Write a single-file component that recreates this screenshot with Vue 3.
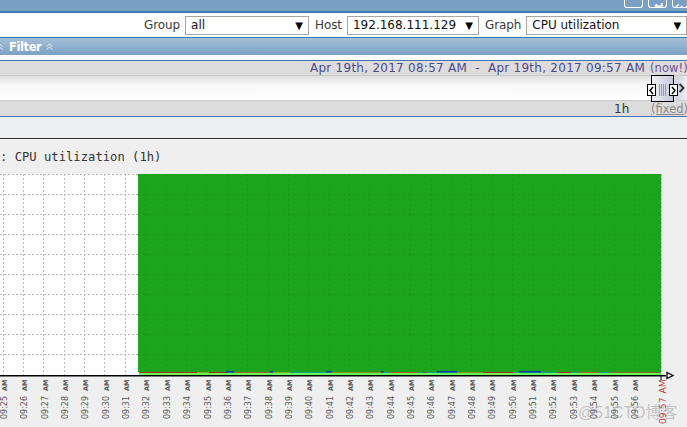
<template>
  <div class="page">
    <div class="topbar">
      <div class="tool-icons">
        <span class="tool-icon"></span>
        <span class="tool-icon">
          <svg width="17" height="8" viewBox="0 0 17 8"><path d="M13 0v3H6M6 3l2-2M6 3l2 2" fill="none" stroke="#fff" stroke-width="1.5" /></svg>
        </span>
        <span class="tool-icon last">
          <svg width="14" height="8" viewBox="0 0 14 8"><path d="M2 5l4-4M8 3l4 4" fill="none" stroke="#fff" stroke-width="1.5" /></svg>
        </span>
      </div>
    </div>
    <div class="controls">
      <label class="ctl-label">Group</label>
      <div class="select group-select"><span>all</span><i>▼</i></div>
      <label class="ctl-label">Host</label>
      <div class="select host-select"><span>192.168.111.129</span><i>▼</i></div>
      <label class="ctl-label">Graph</label>
      <div class="select graph-select"><span>CPU utilization</span><i>▼</i></div>
    </div>
    <div class="filter-bar">
      <svg class="chev first" width="7" height="7" viewBox="0 0 7 7"><path d="M.5 3.5l3-2.5 3 2.5M.5 6.5l3-2.5 3 2.5" fill="none" stroke="#e4ecf4" /></svg>
      <span class="filter-text">Filter</span>
      <svg class="chev" width="7" height="7" viewBox="0 0 7 7"><path d="M.5 3.5l3-2.5 3 2.5M.5 6.5l3-2.5 3 2.5" fill="none" stroke="#e4ecf4" /></svg>
    </div>
    <div class="gap-white"></div>
    <div class="time-row">
      <span class="period">Apr 19th, 2017 08:57 AM &nbsp;-&nbsp; Apr 19th, 2017 09:57 AM</span>
      <span class="now">(now!)</span>
    </div>
    <div class="slider-row">
      <div class="handle">
        <span class="grip grip-l">
          <svg width="7" height="9" viewBox="0 0 7 9"><path d="M5 1L2 4.5 5 8" fill="none" stroke="#000" stroke-width="1.4" /></svg>
        </span>
        <span class="lines"></span>
        <span class="grip grip-r">
          <svg width="7" height="9" viewBox="0 0 7 9"><path d="M2 1l3 3.5L2 8" fill="none" stroke="#000" stroke-width="1.4" /></svg>
        </span>
      </div>
      <div class="slider-next">
        <svg width="8" height="10" viewBox="0 0 8 10"><path d="M1.5 1l4 4-4 4" fill="none" stroke="#333" stroke-width="2" /></svg>
      </div>
    </div>
    <div class="zoom-row">
      <span class="zoom-val">1h</span>
      <span class="fixed">(fixed)</span>
    </div>
    <div class="blank-row"></div>
    <div class="content">
      <div class="title">: CPU utilization (1h)</div>
      <svg class="graph" width="687" height="269" viewBox="0 174 687 269">
        <rect x="0" y="174" width="138" height="201" fill="#fff" />
        <g stroke="#bbb" stroke-dasharray="2 2" fill="none">
          <line v-for="x in gridX" :key="'v' + x" :x1="x + 0.5" :x2="x + 0.5" y1="174" y2="375" />
          <line v-for="y in gridY" :key="'h' + y" x1="0" x2="138" :y1="y + 0.5" :y2="y + 0.5" />
          <line x1="661.5" x2="661.5" y1="174" y2="375" />
        </g>
        <rect x="138" y="174" width="523" height="198" fill="#1ca51c" />
        <g stroke="#189a18" stroke-dasharray="2 3" fill="none">
          <line v-for="y in gridY" :key="'gh' + y" x1="138" x2="661" :y1="y + 0.5" :y2="y + 0.5" />
          <line v-for="x in greenX" :key="'gv' + x" :x1="x + 0.5" :x2="x + 0.5" y1="174" y2="372" />
        </g>
        <rect x="139" y="372" width="522" height="1.5" fill="#0ea08c" />
        <rect v-for="s in bands" :key="s[0]" :x="s[0]" :y="s[3] || 372" :width="s[1] - s[0]" height="1.5" :fill="s[2]" />
        <rect x="139" y="373" width="522" height="2" fill="#66f95a" />
        <rect x="0" y="375" width="666" height="1.5" fill="#000" />
        <path d="M667 372.5l6 3-6 3z" fill="#fff" stroke="#000" stroke-width="1.3" />
        <path d="M661 376v4" stroke="#000" />
        <g class="tick">
          <text v-for="t in ticks" :key="t.label" :transform="`translate(${t.x} 419) rotate(-90)`">{{ t.label }}<tspan class="tick-am" dx="5">AM</tspan></text>
        </g>
        <text class="tick-now" transform="translate(666 424) rotate(-90)">09:57<tspan dx="4">AM</tspan></text>
      </svg>
      <div class="watermark">@51CTO博客</div>
    </div>
  </div>
</template>

<script setup>
const gridX = [3, 23, 43, 64, 84, 104, 125]
const gridY = [174, 194, 214, 234, 254, 274, 294, 314, 334, 354]
const greenX = [145, 166, 186, 206, 227, 247, 268, 288, 308, 329, 349, 369, 390, 410, 431, 451, 471, 492, 512, 533, 553, 573, 594, 614, 634]

// x from, x to, colour, optional y
const bands = [
  [140, 197, '#b8261a'],
  [197, 209, '#8ea012'],
  [209, 227, '#b8261a'],
  [226, 234, '#0c3ea8', 371],
  [234, 270, '#a8601a'],
  [270, 273, '#0c3ea8', 371],
  [273, 290, '#0ea08c'],
  [274, 290, '#8ea012'],
  [290, 326, '#0ea08c'],
  [326, 332, '#0c3ea8', 371],
  [332, 381, '#8a8a16'],
  [381, 384, '#0c3ea8', 371],
  [390, 417, '#b8561a'],
  [423, 426, '#c81e1e'],
  [427, 435, '#0ea08c'],
  [437, 457, '#0c3ea8', 371],
  [457, 483, '#8a8a16'],
  [483, 513, '#b8261a'],
  [519, 541, '#0c3ea8', 371],
  [541, 553, '#0ea08c'],
  [558, 571, '#b8261a'],
  [578, 600, '#a8601a'],
  [610, 660, '#8a6a16'],
]

const ticks = []
for (let i = 0; i < 32; i++) {
  ticks.push({ x: 7 + i * 20.35, label: `09:${25 + i}` })
}
</script>

<style>
html, body {
  margin: 0;
  overflow: hidden;
}
</style>

<style scoped>
.page {
  width: 687px;
  height: 427px;
  overflow: hidden;
  font-family: "DejaVu Sans", sans-serif;
  font-size: 12px;
  background: #efefef;
}
.topbar {
  height: 11px;
  background: #7aa0c3;
  border-bottom: 2px solid #3a78ad;
  display: flex;
  justify-content: flex-end;
  overflow: hidden;
}
.tool-icons {
  display: flex;
  gap: 5px;
  height: 8px;
  margin-right: -1px;
}
.tool-icon {
  width: 17px;
  height: 7px;
  border: 1px solid #fff;
  border-top: 0;
  border-radius: 0 0 3px 3px;
  display: block;
  overflow: hidden;
}
.tool-icon.last {
  width: 14px;
}
.controls {
  height: 24px;
  background: #fff;
  border-bottom: 1px solid #3a78ad;
  display: flex;
  align-items: center;
  padding-left: 144px;
  color: #333;
}
.ctl-label {
  margin-right: 5px;
  color: #3a3a3a;
  font-size: 12px;
  letter-spacing: -0.1px;
}
.select {
  box-sizing: border-box;
  height: 19px;
  border: 1px solid #aaa69e;
  display: flex;
  align-items: center;
  justify-content: space-between;
  padding: 0 5px;
  color: #111;
  flex: none;
}
.select i {
  font-style: normal;
  font-size: 10px;
  color: #000;
}
.group-select {
  width: 124px;
  margin-right: 6px;
}
.host-select {
  width: 132px;
  margin-right: 6px;
}
.graph-select {
  width: 161px;
}
.filter-bar {
  height: 17px;
  background: linear-gradient(#a5bfd8, #7ba1c5);
  display: flex;
  align-items: center;
  color: #fff;
  font-weight: bold;
  font-size: 11.5px;
  letter-spacing: -0.4px;
  overflow: hidden;
}
.filter-text {
  margin-right: 5px;
}
.chev {
  flex: none;
}
.chev.first {
  margin-left: -4px;
  margin-right: 6px;
}
.gap-white {
  height: 5px;
  background: #fff;
}
.time-row {
  box-sizing: border-box;
  height: 16px;
  background: #dcdcdc;
  border-top: 1px solid #4a72a8;
  border-bottom: 1px solid #c8c8c8;
  display: flex;
  align-items: center;
  white-space: nowrap;
  padding-left: 310px;
  font-size: 12px;
  letter-spacing: 0.26px;
}
.period {
  color: #4d4a8c;
  width: 340px;
  flex: none;
}
.now {
  color: #6b4f96;
  font-size: 11.5px;
  letter-spacing: 0.1px;
}
.slider-row {
  position: relative;
  height: 25px;
  background: linear-gradient(#dfdfdf, #f7f7f7 40%, #fff);
  border-bottom: 1px solid #c8c8cf;
  box-sizing: border-box;
}
.handle {
  position: absolute;
  left: 651px;
  top: -1px;
  width: 21px;
  height: 25px;
  border: 1px solid #000;
  background: linear-gradient(90deg, #f0f0f6, #c8c8da);
  z-index: 2;
}
.lines {
  position: absolute;
  left: 7px;
  top: 8px;
  width: 8px;
  height: 12px;
  background: repeating-linear-gradient(90deg, #999 0 1px, transparent 1px 2px);
}
.grip {
  position: absolute;
  top: 8px;
  width: 7px;
  height: 10px;
  background: #fff;
  border: 1px solid #000;
  display: flex;
  align-items: center;
  justify-content: center;
}
.grip-l {
  left: -5px;
}
.grip-r {
  right: -5px;
}
.slider-next {
  position: absolute;
  left: 675px;
  top: 0;
  width: 12px;
  height: 24px;
  background: linear-gradient(90deg, #d0d0e0, #eeeef4);
  display: flex;
  align-items: center;
  justify-content: flex-end;
  padding-right: 1px;
  box-sizing: border-box;
}
.zoom-row {
  box-sizing: border-box;
  height: 15px;
  background: #dcdcdc;
  display: flex;
  align-items: center;
  padding-left: 614px;
  white-space: nowrap;
}
.zoom-val {
  color: #333;
  width: 37px;
  flex: none;
}
.fixed {
  color: #8a8a8a;
  font-size: 11.5px;
  text-decoration: underline;
}
.blank-row {
  height: 21px;
  background: #ebeff2;
  border-top: 1px solid #4a72a8;
  border-bottom: 1px solid #333;
}
.content {
  position: relative;
  height: 288px;
}
.title {
  box-sizing: border-box;
  height: 35px;
  padding: 11px 0 0 0;
  font-family: "DejaVu Sans Mono", monospace;
  font-size: 12.2px;
  line-height: 15px;
  color: #333;
  white-space: pre;
}
.graph {
  display: block;
}
.tick text {
  font-size: 8px;
  fill: #555;
}
.tick-am {
  font-size: 6.5px;
  font-weight: bold;
}
.tick-now {
  font-size: 9.2px;
  fill: #b8474a;
}
.watermark {
  position: absolute;
  left: 578px;
  top: 260px;
  font-family: "Liberation Sans", "Noto Sans CJK SC", sans-serif;
  font-size: 16px;
  color: rgba(130, 130, 130, 0.42);
  white-space: nowrap;
}
</style>
